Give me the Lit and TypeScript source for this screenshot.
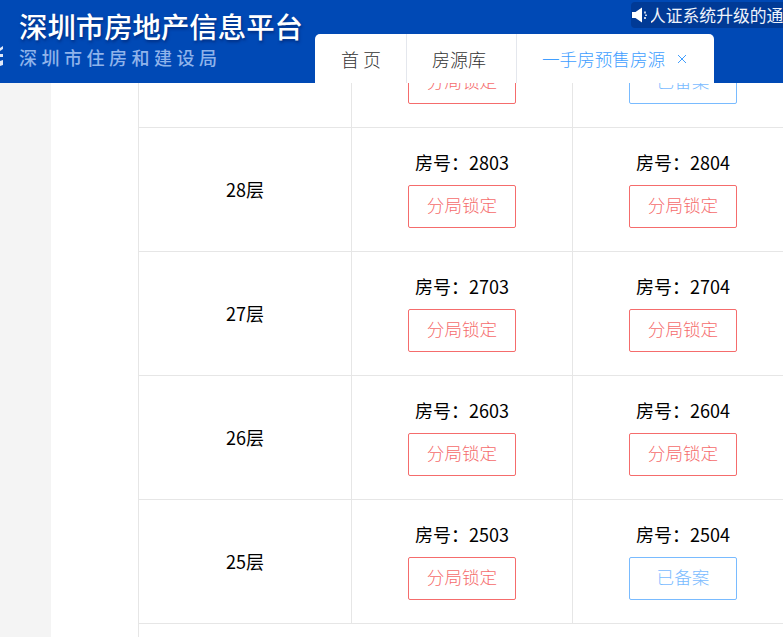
import { LitElement, html, css } from "lit";
import { customElement } from "lit/decorators.js";

type Cell = { room: string; state: "lock" | "filed" };
type Row = { floor: string; cells: Cell[] };

const rows: Row[] = [
  { floor: "29层", cells: [{ room: "2903", state: "lock" }, { room: "2904", state: "filed" }] },
  { floor: "28层", cells: [{ room: "2803", state: "lock" }, { room: "2804", state: "lock" }] },
  { floor: "27层", cells: [{ room: "2703", state: "lock" }, { room: "2704", state: "lock" }] },
  { floor: "26层", cells: [{ room: "2603", state: "lock" }, { room: "2604", state: "lock" }] },
  { floor: "25层", cells: [{ room: "2503", state: "lock" }, { room: "2504", state: "filed" }] },
];

@customElement("app-root")
export class AppRoot extends LitElement {
  static styles = css`
    :host {
      display: block;
      width: 783px;
      height: 637px;
      overflow: hidden;
      background: #fff;
      font-family: "Noto Sans CJK SC", "Liberation Sans", sans-serif;
      color: #000;
    }
    .header {
      position: relative;
      z-index: 2;
      height: 83px;
      background: #0049b5;
      display: flex;
    }
    .logo-mark {
      position: absolute;
      left: 0;
      top: 46px;
      width: 3px;
      height: 20px;
    }
    .brand {
      padding: 8px 0 0 19px;
      width: 315px;
      box-sizing: border-box;
      flex: none;
    }
    .brand-title {
      font-size: 28.4px;
      font-weight: 500;
      line-height: 36px;
      color: #fff;
      white-space: nowrap;
      text-shadow: 1px 2px 3px rgba(0, 20, 80, 0.5);
    }
    .brand-sub {
      font-size: 18px;
      font-weight: 500;
      line-height: 26px;
      letter-spacing: 4.5px;
      color: #8fb3ea;
      white-space: nowrap;
    }
    .tabs {
      align-self: flex-end;
      height: 49px;
      background: #fff;
      border-radius: 5px 5px 0 0;
      display: flex;
      font-size: 18px;
      font-weight: 300;
      color: #333;
      flex: none;
    }
    .tab {
      display: flex;
      align-items: center;
      box-sizing: border-box;
      white-space: nowrap;
      border-right: 1px solid #e4e7ed;
      padding: 0 25px 0 26px;
    }
    .tab.wide {
      padding: 0 30px 0 25px;
    }
    .tab.active {
      border-right: 0;
      color: #409eff;
      font-size: 17.6px;
      padding: 0 27px 0 25px;
      gap: 12px;
    }
    .close {
      width: 10px;
      height: 10px;
      display: block;
    }
    .notice {
      position: absolute;
      left: 631px;
      top: 2px;
      right: 0;
      height: 26px;
      background: #003a96;
      border-radius: 4px 0 0 4px;
      display: flex;
      align-items: center;
      overflow: hidden;
      color: #eef3fb;
      font-size: 16.8px;
      white-space: nowrap;
    }
    .notice svg {
      flex: none;
      width: 18px;
      height: 18px;
    }
    .notice-clip {
      overflow: hidden;
      margin-left: 2px;
      flex: 1;
    }
    .notice-text {
      display: block;
      margin-left: -2px;
    }
    .body {
      display: flex;
      height: 554px;
      overflow: hidden;
    }
    .side {
      flex: none;
      width: 51px;
      background: #f4f4f4;
    }
    .main {
      flex: 1;
      padding-left: 87px;
      overflow: hidden;
    }
    .table {
      margin-top: -79px;
      width: 660px;
      border-left: 1px solid #e6e6e6;
    }
    .row {
      display: grid;
      grid-template-columns: 213px 221px 220px;
      height: 124px;
      box-sizing: border-box;
      border-bottom: 1px solid #e6e6e6;
    }
    .cell {
      display: flex;
      flex-direction: column;
      align-items: center;
      justify-content: center;
      font-size: 18px;
      line-height: 26px;
      border-right: 1px solid #e6e6e6;
    }
    .cell:last-child {
      border-right: 0;
    }
    .floor {
      padding-bottom: 2px;
    }
    .room {
      white-space: nowrap;
      line-height: 22px;
    }
    .btn {
      margin-top: 12px;
      width: 108px;
      height: 43px;
      box-sizing: border-box;
      border: 1px solid;
      border-radius: 2px;
      padding-bottom: 3px;
      display: flex;
      align-items: center;
      justify-content: center;
      font-size: 17.6px;
      font-weight: 300;
    }
    .lock {
      color: #f56c6c;
      border-color: #f56c6c;
    }
    .filed {
      color: #79bbff;
      border-color: #79bbff;
    }
  `;

  render() {
    return html`
      <div class="header">
        <svg class="logo-mark" viewBox="0 0 3 20">
          <path d="M0 2 3 0V3L0 5ZM0 8H3V11H0ZM0 15 3 14V19L0 20Z" fill="#dfe8f8"></path>
        </svg>
        <div class="brand">
          <div class="brand-title">深圳市房地产信息平台</div>
          <div class="brand-sub">深圳市住房和建设局</div>
        </div>
        <div class="tabs">
          <div class="tab">首 页</div>
          <div class="tab wide">房源库</div>
          <div class="tab active">
            一手房预售房源
            <svg class="close" viewBox="0 0 10 10">
              <path d="M1 1 9 9M9 1 1 9" stroke="#409eff" stroke-width="1" fill="none"></path>
            </svg>
          </div>
        </div>
        <div class="notice">
          <svg viewBox="0 0 18 18">
            <path d="M1 6H4.500L11 1.500V16.500L4.500 12H1Z" fill="#fff"></path>
            <path d="M14 5.500V7.500M15 8.500V10M14 11V13" stroke="#fff" stroke-width="1.500" fill="none"></path>
          </svg>
          <div class="notice-clip"><span class="notice-text">人证系统升级的通知</span></div>
        </div>
      </div>
      <div class="body">
        <div class="side"></div>
        <div class="main">
          <div class="table">
            ${rows.map(
              (r) => html`
                <div class="row">
                  <div class="cell"><span class="floor">${r.floor}</span></div>
                  ${r.cells.map(
                    (c) => html`
                      <div class="cell">
                        <div class="room">房号：${c.room}</div>
                        <div class="btn ${c.state}">${c.state === "lock" ? "分局锁定" : "已备案"}</div>
                      </div>
                    `
                  )}
                </div>
              `
            )}
            <div class="row"></div>
          </div>
        </div>
      </div>
    `;
  }
}
